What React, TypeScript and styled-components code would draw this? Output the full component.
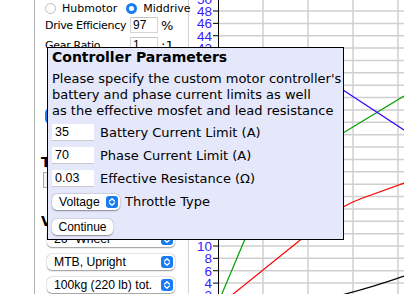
import React from "react";
import styled, { createGlobalStyle } from "styled-components";

const GlobalStyle = createGlobalStyle`
  html, body {
    margin: 0;
    padding: 0;
    background: #fff;
  }
  body {
    font-family: "DejaVu Sans", Verdana, sans-serif;
    color: #000;
  }
`;

const Page = styled.div`
  position: relative;
  display: flex;
  width: 404px;
  height: 294px;
  padding-left: 34px;
  box-sizing: border-box;
  overflow: hidden;
`;

const SidePanel = styled.div`
  width: 155px;
  flex: none;
  box-sizing: border-box;
  border-left: 1px solid #b4b4b4;
  border-right: 1px solid #d4d4d4;
  padding-left: 10px;
  display: flex;
  flex-direction: column;
  font-size: 11px;
  white-space: nowrap;
`;

const Row = styled.div<{ $mt?: number; $h?: number }>`
  display: flex;
  align-items: center;
  height: ${(p) => p.$h ?? 16}px;
  margin-top: ${(p) => p.$mt ?? 0}px;
`;

const Radio = styled.span<{ $on?: boolean }>`
  width: 11px;
  height: 11px;
  box-sizing: border-box;
  border-radius: 50%;
  flex: none;
  border: ${(p) => (p.$on ? "3.5px solid #1a7cf5" : "1px solid #bdbdbd")};
  background: #fff;
  margin-right: 6px;
`;

const RadioLabel = styled.span`
  margin-right: 9px;
`;

const FieldLabel = styled.span`
  width: 85px;
  flex: none;
  letter-spacing: -0.3px;
`;

const SmallInput = styled.div`
  width: 28px;
  height: 16px;
  box-sizing: border-box;
  border: 1px solid #d6d6d6;
  border-top-color: #c4c4c4;
  background: #fff;
  font-family: "Liberation Sans", Arial, sans-serif;
  font-size: 12px;
  line-height: 14px;
  padding-left: 2px;
  margin-right: 3px;
`;

const Unit = styled.span`
  font-size: 13px;
`;

const BlueButton = styled.div<{ $mt: number }>`
  margin-top: ${(p) => p.$mt}px;
  width: 110px;
  height: 16px;
  border-radius: 5px;
  background: #1a7cf5;
`;

const Heading = styled.div<{ $mt: number }>`
  margin-top: ${(p) => p.$mt}px;
  margin-left: -4px;
  font-size: 14px;
  font-weight: bold;
  line-height: 16px;
`;

const WideInput = styled.div<{ $mt: number }>`
  margin-top: ${(p) => p.$mt}px;
  margin-left: -2px;
  width: 60px;
  height: 14px;
  border: 1px solid #a8a8a8;
  background: #f2f2f2;
`;

const SelectBox = styled.div<{ $mt: number; $w?: number; $ml?: number }>`
  display: flex;
  align-items: center;
  justify-content: space-between;
  margin-top: ${(p) => p.$mt}px;
  margin-left: ${(p) => p.$ml ?? 2}px;
  width: ${(p) => p.$w ?? 128}px;
  height: 16px;
  box-sizing: border-box;
  padding: 0 2px 0 7px;
  border-radius: 5px;
  background: #fff;
  box-shadow: 0 0.5px 1.5px rgba(0, 0, 0, 0.4), 0 0 0 0.5px rgba(0, 0, 0, 0.06);
  font-family: "Liberation Sans", Arial, sans-serif;
  font-size: 12.2px;
  flex: none;
`;

const Chevron = () => (
  <svg width="12" height="12" viewBox="0 0 12 12">
    <rect x="0" y="0" width="12" height="12" rx="3" fill="#1a7cf5" />
    <path d="M3.6 5 L6 2.8 L8.4 5 M3.6 7 L6 9.2 L8.4 7" stroke="#fff" strokeWidth="1.3" fill="none" strokeLinecap="round" strokeLinejoin="round" />
  </svg>
);

const ChartArea = styled.div`
  flex: 1;
`;

const Modal = styled.div`
  position: absolute;
  left: 47px;
  top: 47px;
  width: 297px;
  height: 193px;
  box-sizing: border-box;
  border: 1px solid #000;
  background: #e4e8fa;
  padding: 1px 0 0 4px;
  white-space: nowrap;
`;

const Title = styled.div`
  font-size: 14px;
  font-weight: bold;
  line-height: 17px;
`;

const Intro = styled.div`
  font-size: 13px;
  line-height: 16px;
  margin-top: 5px;
`;

const ParamRow = styled.div<{ $mt: number }>`
  display: flex;
  align-items: center;
  height: 17px;
  margin-top: ${(p) => p.$mt}px;
  font-size: 13px;
`;

const ParamInput = styled.div`
  width: 42px;
  height: 17px;
  box-sizing: border-box;
  background: #fff;
  border-bottom: 1px solid #c9c9c9;
  font-family: "Liberation Sans", Arial, sans-serif;
  font-size: 12.5px;
  line-height: 17px;
  padding-left: 3px;
  margin-right: 6px;
`;

const ThrottleLabel = styled.span`
  margin-left: 5px;
`;

const ContinueButton = styled.div`
  margin-top: 9px;
  width: 61px;
  height: 16px;
  border-radius: 5px;
  background: #fff;
  box-shadow: 0 0.5px 1.5px rgba(0, 0, 0, 0.4);
  font-family: "Liberation Sans", Arial, sans-serif;
  font-size: 12px;
  line-height: 16px;
  text-align: center;
`;

const yOf = (v: number) => 246 - (v - 10) * 6.184;
const ticks = Array.from({ length: 25 }, (_, i) => 2 + i * 2);
const vGrid = [263, 308, 353, 398];

const Chart = () => (
  <svg width="215" height="294" viewBox="189 0 215 294" style={{ display: "block" }}>
    {vGrid.map((x) => (
      <line key={x} x1={x} y1={0} x2={x} y2={294} stroke="#cfcfcf" strokeWidth={1.5} />
    ))}
    {ticks.map((v) => (
      <g key={v}>
        <line x1={219} y1={yOf(v)} x2={404} y2={yOf(v)} stroke="#cfcfcf" strokeWidth={1.5} />
        <line x1={213} y1={yOf(v)} x2={218} y2={yOf(v)} stroke="#000" strokeWidth={1} />
        <text
          x={212}
          y={yOf(v) + 5}
          textAnchor="end"
          fill="#3a1cff"
          fontFamily="Liberation Sans, Arial, sans-serif"
          fontSize={13.5}
        >
          {v}
        </text>
      </g>
    ))}
    <line x1={218.5} y1={0} x2={218.5} y2={294} stroke="#000" strokeWidth={1} />
    <path d="M221 296 L245 239 Q280 165 343 133 L404 96" stroke="#00a000" strokeWidth={1.2} fill="none" />
    <path d="M232 295 L330 216 Q342 206 360 199 L404 183" stroke="#ff0000" strokeWidth={1.2} fill="none" />
    <path d="M320 75 L343 90 L404 130" stroke="#3300ff" strokeWidth={1.2} fill="none" />
    <path d="M330 298 Q370 288 404 276" stroke="#000" strokeWidth={1.2} fill="none" />
  </svg>
);

export default function App() {
  return (
    <>
      <GlobalStyle />
      <Page>
        <SidePanel>
          <Row $h={16}>
            <Radio />
            <RadioLabel>Hubmotor</RadioLabel>
            <Radio $on />
            <span>Middrive</span>
          </Row>
          <Row $mt={1}>
            <FieldLabel>Drive Efficiency</FieldLabel>
            <SmallInput>97</SmallInput>
            <Unit>%</Unit>
          </Row>
          <Row $mt={4}>
            <FieldLabel>Gear Ratio</FieldLabel>
            <SmallInput>1</SmallInput>
            <Unit>:1</Unit>
          </Row>
          <BlueButton $mt={55} />
          <Heading $mt={30}>Terrain</Heading>
          <WideInput $mt={2} />
          <Heading $mt={25}>Vehicle</Heading>
          <SelectBox $mt={2}>
            <span>26" Wheel</span>
            <Chevron />
          </SelectBox>
          <SelectBox $mt={7}>
            <span>MTB, Upright</span>
            <Chevron />
          </SelectBox>
          <SelectBox $mt={7}>
            <span>100kg (220 lb) tot.</span>
            <Chevron />
          </SelectBox>
        </SidePanel>
        <ChartArea>
          <Chart />
        </ChartArea>
        <Modal>
          <Title>Controller Parameters</Title>
          <Intro>
            Please specify the custom motor controller's
            <br />
            battery and phase current limits as well
            <br />
            as the effective mosfet and lead resistance
          </Intro>
          <ParamRow $mt={5}>
            <ParamInput>35</ParamInput>
            Battery Current Limit (A)
          </ParamRow>
          <ParamRow $mt={6}>
            <ParamInput>70</ParamInput>
            Phase Current Limit (A)
          </ParamRow>
          <ParamRow $mt={6}>
            <ParamInput>0.03</ParamInput>
            Effective Resistance (Ω)
          </ParamRow>
          <ParamRow $mt={6}>
            <SelectBox $mt={0} $ml={0} $w={68}>
              <span>Voltage</span>
              <Chevron />
            </SelectBox>
            <ThrottleLabel>Throttle Type</ThrottleLabel>
          </ParamRow>
          <ContinueButton>Continue</ContinueButton>
        </Modal>
      </Page>
    </>
  );
}
